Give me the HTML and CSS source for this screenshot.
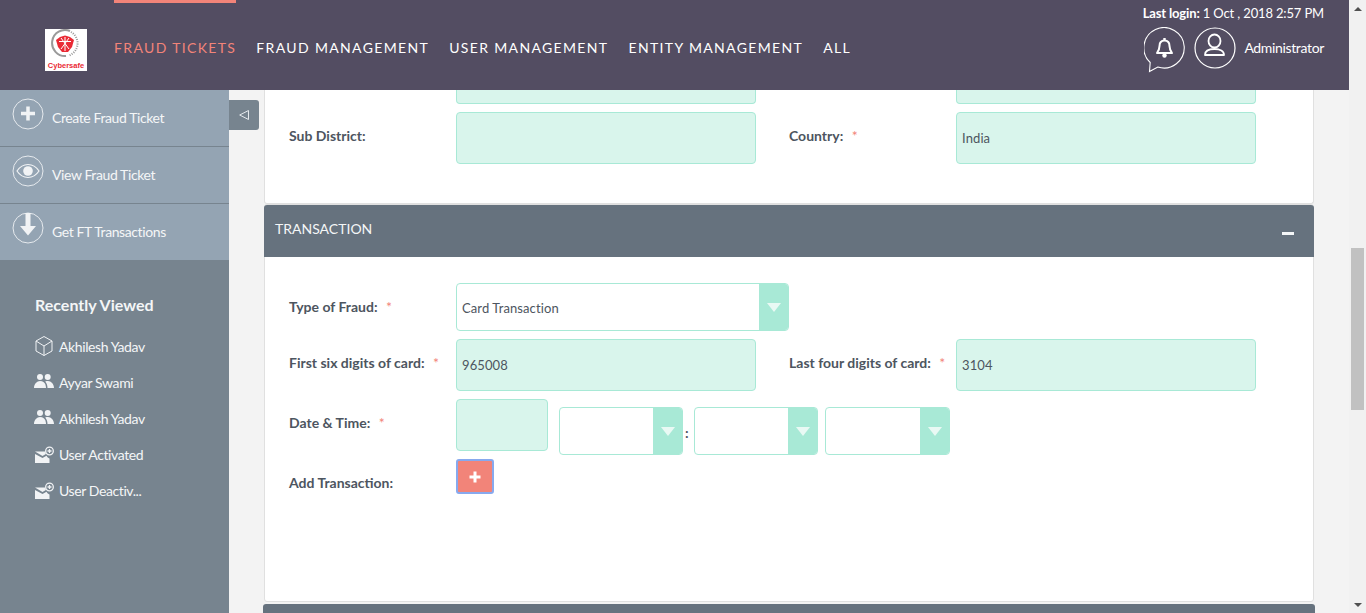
FILE: index.html
```html
<!DOCTYPE html>
<html lang="en">
<head>
  <meta charset="UTF-8">
  <meta name="viewport" content="width=device-width, initial-scale=1.0">
  <link rel="stylesheet" href="styles.css">
  <title>Fraud Tickets</title>
</head>
<body>
<div class="page">
  <div class="main">
    <!-- top bar -->
    <header class="topbar">
      <div class="logo">
        <svg width="42" height="42" viewBox="0 0 42 42">
          <path d="M25 2A13 13 0 1 0 21 27" fill="none" stroke="#9a9a9a" stroke-width="2"/>
          <path d="M26 3A13 13 0 0 1 24 26.5" fill="none" stroke="#999" stroke-width="2" stroke-dasharray="1 1.3"/>
          <path d="M15 8l5-1.5L25 8l4 3-2 7-4 5h-6l-4-5-2-7z" fill="#ea2a35"/>
          <path d="M20 8v14M14 12.5l12 0M16 20l8-11M24 20L16 9" stroke="#fff" stroke-width="1" fill="none"/>
          <text x="21" y="38.5" class="logo-text" text-anchor="middle">Cybersafe</text>
        </svg>
      </div>
      <nav class="nav">
        <a class="nav-item active">Fraud Tickets</a>
        <a class="nav-item">Fraud Management</a>
        <a class="nav-item">User Management</a>
        <a class="nav-item">Entity Management</a>
        <a class="nav-item">All</a>
      </nav>
      <div class="account">
        <div class="last-login"><b>Last login:</b> 1 Oct , 2018 2:57 PM</div>
        <div class="account-row">
          <svg class="bell" width="42" height="46" viewBox="0 0 42 46" fill="none" stroke="#fff">
            <path d="M6.2 35.5A20.2 20.2 0 1 1 13.8 40L5.5 44.5Z" stroke-width="1.1"/>
            <path d="M13 26c1.500-2 2.500-3.500 2.500-7 0-3.500 2-5.500 5-5.500s5 2 5 5.500c0 3.500 1 5 2.500 7Z" stroke-width="2" stroke-linejoin="round"/>
            <circle cx="20.5" cy="28.5" r="2.2" fill="#fff" stroke="none"/>
            <rect x="19.3" y="11" width="2.4" height="3" fill="#fff" stroke="none"/>
          </svg>
          <svg class="user" width="42" height="42" viewBox="0 0 42 42" fill="none" stroke="#fff">
            <circle cx="21" cy="21" r="20" stroke-width="1.2"/>
            <ellipse cx="20.5" cy="14" rx="6" ry="6.5" stroke-width="1.8"/>
            <path d="M11 28c0-4 4-6 9.500-6s9.500 2 9.500 6Z" stroke-width="1.8" stroke-linejoin="round"/>
          </svg>
          <span class="admin-name">Administrator</span>
        </div>
      </div>
    </header>

    <div class="below">
      <!-- left menu -->
      <aside class="sidebar">
        <a class="action">
          <svg width="32" height="32" viewBox="0 0 32 32"><circle cx="16" cy="16" r="15" fill="none" stroke="#e6eaee" stroke-width="1"/><path d="M16 8.5v14M9 15.5h14" stroke="#f1f3f5" stroke-width="3.5"/></svg>
          <span>Create Fraud Ticket</span>
        </a>
        <a class="action">
          <svg width="32" height="32" viewBox="0 0 32 32"><circle cx="16" cy="16" r="15" fill="none" stroke="#e6eaee" stroke-width="1"/><path d="M5 16c3-4.500 7-6.500 11-6.500s8 2 11 6.500c-3 4.500-7 6.500-11 6.500S8 20.500 5 16Z" fill="none" stroke="#f1f3f5" stroke-width="1.2"/><circle cx="16" cy="16" r="4.8" fill="#f1f3f5"/></svg>
          <span>View Fraud Ticket</span>
        </a>
        <a class="action">
          <svg width="32" height="32" viewBox="0 0 32 32"><circle cx="16" cy="16" r="15" fill="none" stroke="#e6eaee" stroke-width="1"/><path d="M13.5 1h5v13H24l-8 9.5L8 14h5.500Z" fill="#f1f3f5"/></svg>
          <span>Get FT Transactions</span>
        </a>
        <div class="recent">
          <h3 class="recent-title">Recently Viewed</h3>
          <a class="recent-item">
            <svg width="20" height="20" viewBox="0 0 20 20" fill="none" stroke="#f1f3f5" stroke-width="1"><path d="M10 .5l8 4.500v10l-8 4.500-8-4.500V5ZM2 5l8 5 8-5M10 10v9.500"/></svg>
            <span>Akhilesh Yadav</span>
          </a>
          <a class="recent-item">
            <svg width="20" height="20" viewBox="0 0 20 20" fill="#f1f3f5"><circle cx="6" cy="5" r="3"/><circle cx="13.7" cy="5" r="3"/><path d="M0 16c0-4 3-7 6-7s4.500 1.500 5.200 3c.3.800.8 2.500.8 4ZM13.500 16c0-2.500-.7-4.700-2.300-6.500 1-.4 1.800-.5 2.800-.5 3 0 6 3 6 7Z"/></svg>
            <span>Ayyar Swami</span>
          </a>
          <a class="recent-item">
            <svg width="20" height="20" viewBox="0 0 20 20" fill="#f1f3f5"><circle cx="6" cy="5" r="3"/><circle cx="13.7" cy="5" r="3"/><path d="M0 16c0-4 3-7 6-7s4.500 1.500 5.200 3c.3.800.8 2.500.8 4ZM13.500 16c0-2.500-.7-4.700-2.300-6.500 1-.4 1.800-.5 2.800-.5 3 0 6 3 6 7Z"/></svg>
            <span>Akhilesh Yadav</span>
          </a>
          <a class="recent-item">
            <svg width="20" height="20" viewBox="0 0 20 20" fill="#f1f3f5"><path d="M1 10l7.500 4 4-2.200c.8 1.400 1.700 2.200 3 2.700V19H1Z"/><path d="M1 7.500h10.500c0 1 .2 1.800.4 2.500l-3.400 2Z"/><circle cx="15.5" cy="7" r="3.800" fill="none" stroke="#f1f3f5" stroke-width="1.3"/><path d="M15.5 5v4M13.500 7h4" stroke="#f1f3f5" stroke-width="1.3"/></svg>
            <span>User Activated</span>
          </a>
          <a class="recent-item">
            <svg width="20" height="20" viewBox="0 0 20 20" fill="#f1f3f5"><path d="M1 10l7.500 4 4-2.200c.8 1.400 1.700 2.200 3 2.700V19H1Z"/><path d="M1 7.500h10.500c0 1 .2 1.800.4 2.500l-3.400 2Z"/><circle cx="15.5" cy="7" r="3.800" fill="none" stroke="#f1f3f5" stroke-width="1.3"/><path d="M15.5 5v4M13.500 7h4" stroke="#f1f3f5" stroke-width="1.3"/></svg>
            <span>User Deactiv...</span>
          </a>
        </div>
      </aside>

      <!-- small tab to fold the menu, sits over the content -->
      <button class="fold-tab">
        <svg width="10" height="10" viewBox="0 0 10 10"><path d="M9.5 .5v9L.7 5Z" fill="none" stroke="#e6eaee" stroke-width="1"/></svg>
      </button>

      <div class="content">
        <section class="panel address">
          <div class="row stub-row">
            <div class="label"></div>
            <div class="input stub"></div>
            <div class="label label-right"></div>
            <div class="input stub"></div>
          </div>
          <div class="row">
            <div class="label">Sub District:</div>
            <div class="input"></div>
            <div class="label label-right">Country: <i>*</i></div>
            <div class="input">India</div>
          </div>
        </section>

        <section class="panel transaction">
          <div class="panel-head">
            <span>Transaction</span>
            <span class="collapse"></span>
          </div>
          <div class="panel-body">
            <div class="row fraud-row">
              <div class="label">Type of Fraud: <i>*</i></div>
              <div class="select wide">
                <span>Card Transaction</span>
                <span class="arrow"></span>
              </div>
            </div>
            <div class="row">
              <div class="label">First six digits of card: <i>*</i></div>
              <div class="input">965008</div>
              <div class="label label-right">Last four digits of card: <i>*</i></div>
              <div class="input">3104</div>
            </div>
            <div class="row date-row">
              <div class="label">Date &amp; Time: <i>*</i></div>
              <div class="input date"></div>
              <div class="time-selects">
                <div class="select time"><span></span><span class="arrow"></span></div>
                <span class="colon">:</span>
                <div class="select time"><span></span><span class="arrow"></span></div>
                <div class="select time last"><span></span><span class="arrow"></span></div>
              </div>
            </div>
            <div class="row add-row">
              <div class="label">Add Transaction:</div>
              <button class="add-btn">
                <svg width="12" height="12" viewBox="0 0 12 12"><path d="M6 .5v11M.5 6h11" stroke="#fff" stroke-width="3"/></svg>
              </button>
            </div>
          </div>
        </section>

        <section class="panel closed">
          <div class="panel-head"></div>
        </section>
      </div>
    </div>
  </div>

  <!-- page scrollbar as it shows in the screenshot -->
  <div class="scrollbar">
    <span class="scroll-up"></span>
    <div class="scroll-track"><div class="scroll-thumb"></div></div>
    <span class="scroll-down"></span>
  </div>
</div>
</body>
</html>
```

FILE: styles.css
```css
* {
  box-sizing: border-box;
}

html, body {
  margin: 0;
  height: 100%;
  overflow: hidden;
}

body {
  font-family: Lato, "Open Sans", sans-serif;
  font-size: 14px;
  color: #4d5560;
}

.page {
  display: flex;
  height: 613px;
}

.main {
  flex: 1;
  min-width: 0;
  display: flex;
  flex-direction: column;
}

/* top bar */
.topbar {
  height: 90px;
  background-color: #534d62;
  display: flex;
  padding-left: 45px;
  padding-right: 25px;
}

.logo {
  width: 42px;
  height: 42px;
  margin-top: 29px;
  background-color: #fff;
}

.logo svg {
  display: block;
}

.logo-text {
  font-family: "Liberation Sans", sans-serif;
  font-size: 7.5px;
  font-weight: bold;
  fill: #ea2a35;
}

.nav {
  display: flex;
  gap: 20px;
  margin-left: 27px;
}

.nav-item {
  height: 90px;
  padding-top: 36px;
  color: #fff;
  font-size: 14px;
  line-height: 18px;
  letter-spacing: 1.35px;
  text-transform: uppercase;
  border-top: 3px solid transparent;
}

.nav-item.active {
  color: #f28479;
  border-top-color: #f28479;
}

.account {
  margin-left: auto;
  display: flex;
  flex-direction: column;
  align-items: flex-end;
  color: #fff;
}

.last-login {
  margin-top: 5px;
  font-size: 13px;
  line-height: 17px;
  letter-spacing: -0.15px;
}

.account-row {
  display: flex;
  align-items: flex-start;
  margin-top: 5px;
}

.user {
  margin-left: 8px;
}

.admin-name {
  margin-left: 8px;
  margin-top: 12px;
  line-height: 17px;
  letter-spacing: -0.35px;
}

/* left menu */
.below {
  flex: 1;
  min-height: 0;
  display: flex;
  position: relative;
}

.sidebar {
  width: 229px;
  flex-shrink: 0;
  background-color: #77848f;
  color: #f4f6f7;
}

.action {
  display: flex;
  align-items: flex-start;
  height: 57px;
  padding: 8px 0 0 12px;
  background-color: #94a4b3;
  border-bottom: 1px solid #77848f;
}

.action svg {
  flex-shrink: 0;
}

.action span {
  margin: 11px 0 0 8px;
  line-height: 17px;
  letter-spacing: -0.4px;
}

.recent {
  padding: 34px 0 0 35px;
}

.recent-title {
  margin: 0 0 13px;
  font-size: 16px;
  line-height: 20px;
  font-weight: bold;
  letter-spacing: 0;
}

.recent-item {
  display: flex;
  align-items: center;
  height: 36px;
}

.recent-item svg {
  margin-right: 5px;
  margin-left: -1px;
  flex-shrink: 0;
}

.recent-item span {
  letter-spacing: -0.4px;
}

.fold-tab {
  position: absolute;
  left: 229px;
  top: 10px;
  width: 30px;
  height: 30px;
  padding: 0;
  border: none;
  border-radius: 0 3px 3px 0;
  background-color: #77848f;
  display: flex;
  align-items: center;
  justify-content: center;
}

/* form area */
.content {
  flex: 1;
  min-width: 0;
  background-color: #f3f3f3;
  padding: 0 35px;
  overflow: hidden;
}

.panel {
  background-color: #fff;
  border: 1px solid #e0e0e0;
  border-top: none;
  border-radius: 0 0 3px 3px;
}

.address {
  height: 114px;
  padding-left: 24px;
}

.row {
  display: flex;
  margin-bottom: 8px;
}

.stub-row {
  height: 14px;
}

.label {
  width: 167px;
  flex-shrink: 0;
  font-weight: bold;
  line-height: 17px;
  padding-top: 15px;
  white-space: nowrap;
}

.label i {
  font-style: normal;
  font-weight: normal;
  color: #f28479;
  margin-left: 5px;
}

.label-right {
  margin-left: 33px;
}

.input {
  width: 300px;
  height: 52px;
  flex-shrink: 0;
  background-color: #d9f5ec;
  border: 1px solid #a8e9d6;
  border-radius: 4px;
  padding: 17px 5px 0;
  font-size: 13px;
  line-height: 17px;
  letter-spacing: 0.1px;
}

.input.stub {
  height: 14px;
  padding: 0;
  border-top: none;
  border-radius: 0 0 4px 4px;
}

.transaction {
  border-radius: 3px;
  border-top: 1px solid #e0e0e0;
  height: 398px;
}

.panel-head {
  height: 52px;
  background-color: #66727e;
  color: #f4f6f7;
  text-transform: uppercase;
  display: flex;
  justify-content: space-between;
  align-items: flex-start;
  padding: 15px 20px 0 11px;
  line-height: 17px;
  border-radius: 3px 3px 0 0;
  margin: 0 -1px;
}

.collapse {
  width: 12px;
  height: 3px;
  background-color: #f4f6f7;
  margin-top: 12px;
}

.panel-body {
  padding: 26px 0 0 24px;
}

.fraud-row {
  height: 48px;
}

.select {
  display: flex;
  justify-content: space-between;
  background-color: #fff;
  border: 1px solid #a8e9d6;
  border-radius: 4px;
  overflow: hidden;
  height: 48px;
}

.select span:first-child {
  padding: 16px 0 0 5px;
  font-size: 13px;
  line-height: 17px;
  letter-spacing: 0.1px;
}

.wide {
  width: 333px;
}

.arrow {
  width: 29px;
  background-color: #a8e9d6;
  display: flex;
  align-items: center;
  justify-content: center;
}

.arrow::after {
  content: "";
  border-left: 7px solid transparent;
  border-right: 7px solid transparent;
  border-top: 9px solid #e9f9f4;
  margin-top: 1px;
}

.date-row {
  height: 52px;
}

.date {
  width: 92px;
}

.time-selects {
  display: flex;
  margin-left: 11px;
  padding-top: 8px;
}

.time {
  width: 124px;
}

.colon {
  width: 11px;
  padding: 17px 0 0 2px;
  line-height: 17px;
  font-weight: bold;
}

.time.last {
  margin-left: 7px;
  width: 125px;
}

.add-row {
  margin-bottom: 0;
}

.add-btn {
  width: 38px;
  height: 35px;
  padding: 0 1px 0 0;
  background-color: #f28479;
  border: 2px solid #87a9ee;
  border-radius: 3px;
  display: flex;
  align-items: center;
  justify-content: center;
}

.closed {
  margin-top: 2px;
  border: none;
}

/* scrollbar */
.scrollbar {
  width: 17px;
  flex-shrink: 0;
  background-color: #f1f1f1;
  display: flex;
  flex-direction: column;
  align-items: center;
}

.scroll-up,
.scroll-down {
  height: 17px;
  flex-shrink: 0;
  display: flex;
  align-items: center;
}

.scroll-up::after {
  content: "";
  border-left: 4px solid transparent;
  border-right: 4px solid transparent;
  border-bottom: 4px solid #505050;
}

.scroll-down::after {
  content: "";
  border-left: 4px solid transparent;
  border-right: 4px solid transparent;
  border-top: 4px solid #505050;
}

.scroll-track {
  flex: 1;
  width: 100%;
  padding: 231px 2px 0;
}

.scroll-thumb {
  height: 162px;
  background-color: #c1c1c1;
}
```
